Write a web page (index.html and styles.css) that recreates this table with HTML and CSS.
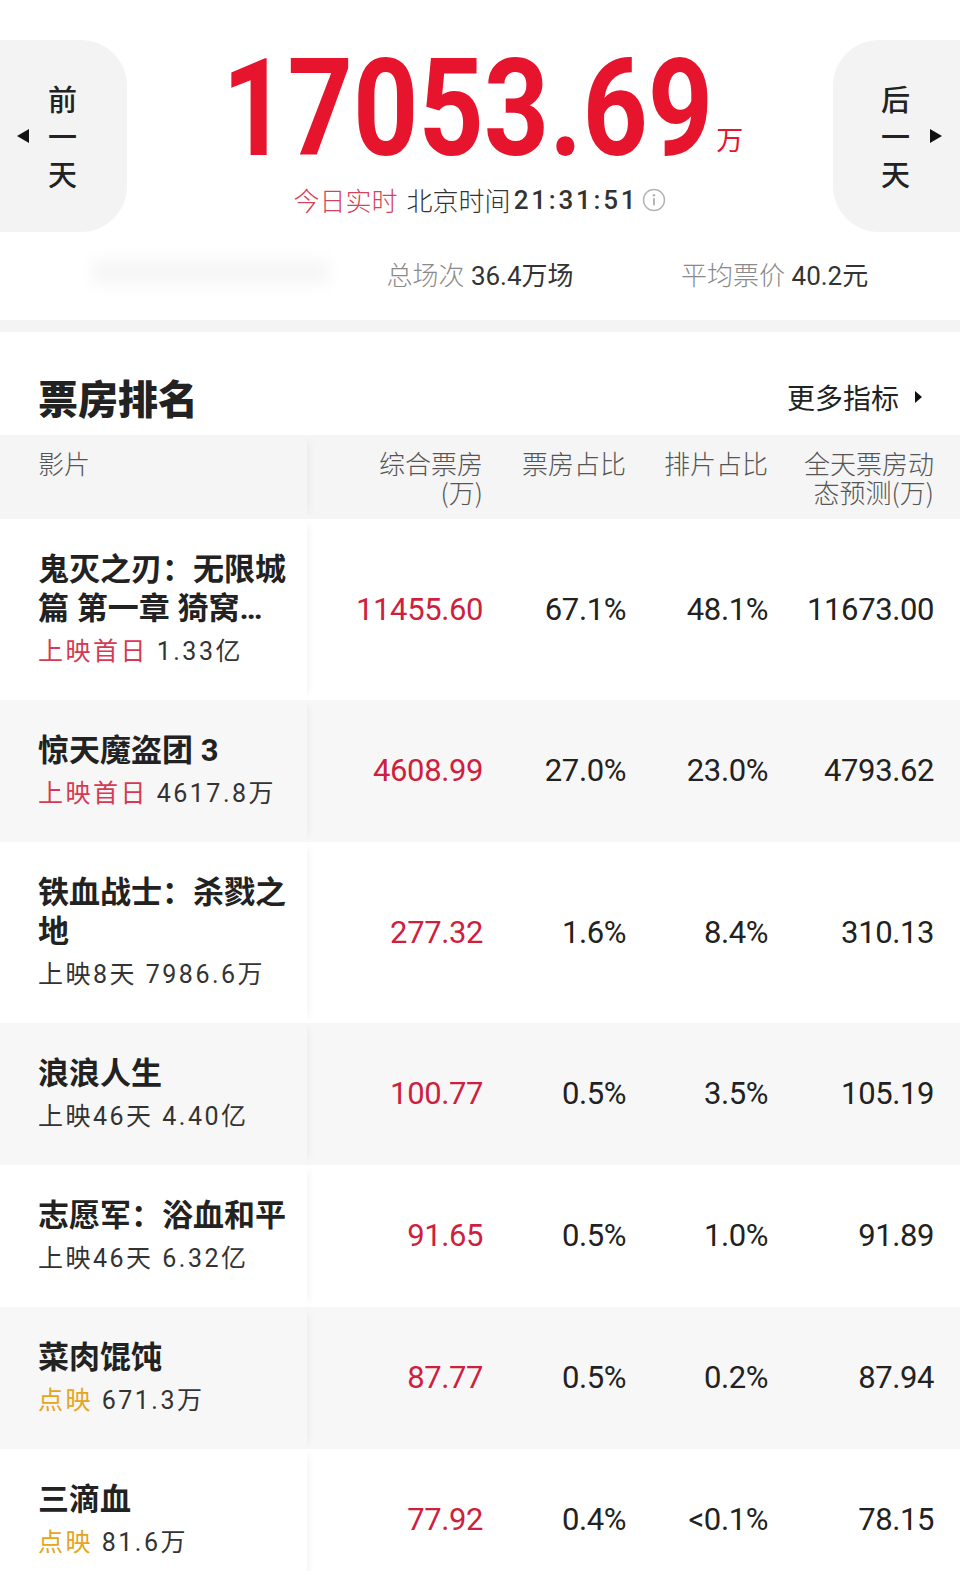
FILE: index.html
```html
<!DOCTYPE html>
<html lang="zh-CN">
<head>
<meta charset="utf-8">
<title>票房排名</title>
<link rel="stylesheet" href="styles.css">
</head>
<body>
<div class="page">
  <header class="hero">
    <div class="day-btn prev">
      <span class="tri tri-left"></span>
      <span class="vtext">前一天</span>
    </div>
    <div class="total">
      <div class="amount"><span class="num">17053.69</span><span class="unit">万</span></div>
      <div class="realtime">
        <span class="rt-label">今日实时</span>
        <span class="rt-city">北京时间</span><span class="rt-time">21:31:51</span>
        <svg class="info" width="24" height="24" viewBox="0 0 24 24"><circle cx="12" cy="12" r="10.5" fill="none" stroke="#b5b5b5" stroke-width="1.5"/><circle cx="12" cy="7.3" r="1.3" fill="#b5b5b5"/><rect x="11" y="10" width="2" height="7.5" rx="0.8" fill="#b5b5b5"/></svg>
      </div>
    </div>
    <div class="day-btn next">
      <span class="vtext">后一天</span>
      <span class="tri tri-right"></span>
    </div>
  </header>

  <div class="stats">
    <div class="stat"><span class="blur-block"></span></div>
    <div class="stat"><span class="k">总场次</span> <span class="v">36.4万场</span></div>
    <div class="stat"><span class="k">平均票价</span> <span class="v">40.2元</span></div>
  </div>

  <div class="divider"></div>

  <section class="ranking">
    <div class="rank-head">
      <h2 class="rank-title">票房排名</h2>
      <div class="more">更多指标<span class="tri tri-small"></span></div>
    </div>

    <div class="table">
      <div class="row head">
        <div class="cell film">影片</div>
        <div class="cell">综合票房<br>(万)</div>
        <div class="cell">票房占比</div>
        <div class="cell">排片占比</div>
        <div class="cell">全天票房动<br>态预测(万)</div>
      </div>

      <div class="row">
        <div class="cell film">
          <div class="title">鬼灭之刃：无限城篇 第一章 猗窝座再袭</div>
          <div class="sub"><span class="tag-first">上映首日</span> 1.33亿</div>
        </div>
        <div class="cell num red">11455.60</div>
        <div class="cell num">67.1%</div>
        <div class="cell num">48.1%</div>
        <div class="cell num">11673.00</div>
      </div>

      <div class="row">
        <div class="cell film">
          <div class="title">惊天魔盗团 3</div>
          <div class="sub"><span class="tag-first">上映首日</span> 4617.8万</div>
        </div>
        <div class="cell num red">4608.99</div>
        <div class="cell num">27.0%</div>
        <div class="cell num">23.0%</div>
        <div class="cell num">4793.62</div>
      </div>

      <div class="row">
        <div class="cell film">
          <div class="title">铁血战士：杀戮之地</div>
          <div class="sub">上映8天 7986.6万</div>
        </div>
        <div class="cell num red">277.32</div>
        <div class="cell num">1.6%</div>
        <div class="cell num">8.4%</div>
        <div class="cell num">310.13</div>
      </div>

      <div class="row">
        <div class="cell film">
          <div class="title">浪浪人生</div>
          <div class="sub">上映46天 4.40亿</div>
        </div>
        <div class="cell num red">100.77</div>
        <div class="cell num">0.5%</div>
        <div class="cell num">3.5%</div>
        <div class="cell num">105.19</div>
      </div>

      <div class="row">
        <div class="cell film">
          <div class="title">志愿军：浴血和平</div>
          <div class="sub">上映46天 6.32亿</div>
        </div>
        <div class="cell num red">91.65</div>
        <div class="cell num">0.5%</div>
        <div class="cell num">1.0%</div>
        <div class="cell num">91.89</div>
      </div>

      <div class="row">
        <div class="cell film">
          <div class="title">菜肉馄饨</div>
          <div class="sub"><span class="tag-pre">点映</span> 671.3万</div>
        </div>
        <div class="cell num red">87.77</div>
        <div class="cell num">0.5%</div>
        <div class="cell num">0.2%</div>
        <div class="cell num">87.94</div>
      </div>

      <div class="row">
        <div class="cell film">
          <div class="title">三滴血</div>
          <div class="sub"><span class="tag-pre">点映</span> 81.6万</div>
        </div>
        <div class="cell num red">77.92</div>
        <div class="cell num">0.4%</div>
        <div class="cell num">&lt;0.1%</div>
        <div class="cell num">78.15</div>
      </div>
    </div>
  </section>
</div>
</body>
</html>
```

FILE: styles.css
```css
* { box-sizing: border-box; margin: 0; padding: 0; }

body {
  width: 960px;
  background: #fff;
  font-family: Roboto, "Noto Sans CJK SC", sans-serif;
  color: #222;
}

.page { width: 960px; overflow: hidden; }

/* ---------- hero ---------- */
.hero {
  display: flex;
  align-items: flex-start;
  padding-top: 40px;
}

.day-btn {
  flex: 0 0 127px;
  height: 192px;
  background: #f3f3f3;
  display: flex;
  align-items: center;
}
.day-btn.prev { border-radius: 0 46px 46px 0; padding-left: 17px; gap: 19px; }
.day-btn.next { border-radius: 46px 0 0 46px; padding-left: 48px; gap: 20px; }

.vtext {
  width: 29px;
  font-family: "Noto Sans CJK SC", sans-serif;
  font-size: 29px;
  line-height: 37.5px;
  font-weight: 500;
  color: #222;
  word-break: break-all;
  text-align: center;
}

.tri { display: inline-block; width: 0; height: 0; }
.tri-left { border-right: 12px solid #111; border-top: 7px solid transparent; border-bottom: 7px solid transparent; }
.tri-right { border-left: 12px solid #111; border-top: 7px solid transparent; border-bottom: 7px solid transparent; }

.total {
  flex: 1;
  text-align: center;
  padding-top: 2px;
}

.amount {
  font-size: 135px;
  line-height: 135px;
  font-weight: 700;
  color: #e6142d;
  white-space: nowrap;
  padding-left: 4px;
}
.amount .num {
  display: inline-block;
  transform: scaleX(0.845);
  margin: 0 -44px;
}
.amount .unit {
  font-family: "Noto Sans CJK SC", sans-serif;
  font-size: 27px;
  line-height: 1;
  font-weight: 400;
  margin-left: 2px;
  vertical-align: 5px;
}

.realtime {
  margin-top: 8px;
  font-size: 26px;
  line-height: 30px;
  display: flex;
  justify-content: center;
  align-items: center;
}
.rt-label { color: #d44357; font-weight: 300; font-family: "Noto Sans CJK SC", sans-serif; margin-right: 9px; }
.rt-city { color: #333; font-weight: 300; font-family: "Noto Sans CJK SC", sans-serif; }
.rt-time { color: #333; font-weight: 500; letter-spacing: 2.8px; margin-left: 3px; }
.info { margin-left: 4px; }

/* ---------- stats ---------- */
.stats {
  display: grid;
  grid-template-columns: repeat(3, 1fr);
  padding: 0 38px;
  margin-top: 27px;
  font-size: 26px;
  line-height: 30px;
}
.stat { text-align: center; white-space: nowrap; }
.stat .k { color: #8a8a8a; font-family: "Noto Sans CJK SC", sans-serif; font-weight: 300; }
.stat .v { color: #333; }
.blur-block {
  display: inline-block;
  width: 236px;
  height: 26px;
  margin-left: 50px;
  background: #eeeeee;
  filter: blur(7px);
  opacity: 0.5;
}

.divider { height: 12px; background: #f4f4f4; margin-top: 29px; }

/* ---------- ranking ---------- */
.rank-head {
  display: flex;
  justify-content: space-between;
  align-items: center;
  padding: 41px 38px 14px 38px;
}
.rank-title {
  font-family: "Noto Sans CJK SC", sans-serif;
  font-size: 40px;
  line-height: 48px;
  font-weight: 900;
  color: #222;
}
.more {
  font-family: "Noto Sans CJK SC", sans-serif;
  font-size: 28px;
  line-height: 34px;
  color: #222;
  display: flex;
  align-items: center;
  gap: 16px;
}
.tri-small { border-left: 7px solid #111; border-top: 6px solid transparent; border-bottom: 6px solid transparent; }

.row {
  display: grid;
  grid-template-columns: 307px 176px 143px 142px 166px;
  padding-right: 26px;
  align-items: center;
}
.row:nth-child(odd) { background: #f7f7f7; }
.row.head { background: #f5f5f5; align-items: start; }

.cell { text-align: right; }
.cell.film {
  text-align: left;
  align-self: stretch;
  padding: 31px 19px 31px 38px;
  box-shadow: 7px 0 8px -6px rgba(0, 0, 0, 0.06);
}

.row.head .cell {
  font-family: "Noto Sans CJK SC", sans-serif;
  font-size: 26px;
  line-height: 29px;
  font-weight: 300;
  color: #555;
  padding-top: 13px;
  padding-bottom: 13px;
}
.row.head .cell.film { padding-left: 38px; }

.title {
  font-size: 31px;
  line-height: 39px;
  font-weight: 700;
  color: #222;
  display: -webkit-box;
  -webkit-line-clamp: 2;
  -webkit-box-orient: vertical;
  overflow: hidden;
}
.sub {
  margin-top: 6px;
  font-size: 25px;
  line-height: 35px;
  color: #333;
  font-weight: 400;
  letter-spacing: 2.5px;
}
.tag-first { color: #d63a52; }
.tag-pre { color: #e5a422; }

.cell.num {
  font-size: 31px;
  line-height: 36px;
  color: #222;
  letter-spacing: -0.4px;
}
.cell.num.red { color: #cf1f3f; }
```
